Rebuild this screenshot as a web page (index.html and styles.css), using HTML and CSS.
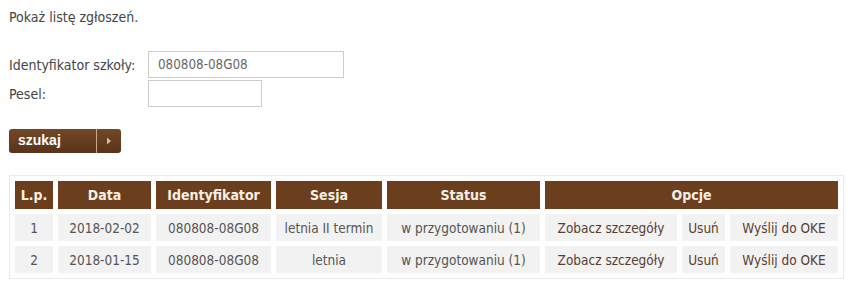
FILE: index.html
```html
<!DOCTYPE html>
<html lang="pl">
<head>
<meta charset="utf-8">
<title>Lista zgłoszeń</title>
<link rel="stylesheet" href="styles.css">
</head>
<body>
<div class="page">
  <p class="intro">Pokaż listę zgłoszeń.</p>
  <form class="search">
    <div class="field">
      <label class="label">Identyfikator szkoły:</label>
      <input class="input input-wide" type="text" value="080808-08G08">
    </div>
    <div class="field">
      <label class="label">Pesel:</label>
      <input class="input input-short" type="text" value="">
    </div>
    <button class="btn" type="button">
      <span class="btn-text">szukaj</span>
      <span class="btn-arrow"><svg width="6" height="8" viewBox="0 0 6 8"><path d="M1 0.5 L5 4 L1 7.5 Z" fill="#d9bf9c"/></svg></span>
    </button>
  </form>
  <table class="list">
    <colgroup>
      <col class="c-lp"><col class="c-data"><col class="c-id"><col class="c-ses"><col class="c-st"><col class="c-o1"><col class="c-o2"><col class="c-o3">
    </colgroup>
    <thead>
      <tr>
        <th>L.p.</th><th>Data</th><th>Identyfikator</th><th>Sesja</th><th>Status</th><th colspan="3">Opcje</th>
      </tr>
    </thead>
    <tbody>
      <tr>
        <td>1</td><td>2018-02-02</td><td>080808-08G08</td><td>letnia II termin</td><td>w przygotowaniu (1)</td>
        <td><a class="link" href="#">Zobacz szczegóły</a></td><td><a class="link" href="#">Usuń</a></td><td><a class="link" href="#">Wyślij do OKE</a></td>
      </tr>
      <tr>
        <td>2</td><td>2018-01-15</td><td>080808-08G08</td><td>letnia</td><td>w przygotowaniu (1)</td>
        <td><a class="link" href="#">Zobacz szczegóły</a></td><td><a class="link" href="#">Usuń</a></td><td><a class="link" href="#">Wyślij do OKE</a></td>
      </tr>
    </tbody>
  </table>
</div>
</body>
</html>
```
FILE: styles.css
```css
html, body {
  margin: 0;
  padding: 0;
  background: #ffffff;
}
body {
  font-family: "DejaVu Sans Condensed", "DejaVu Sans", Verdana, sans-serif;
  font-size: 14px;
  color: #444444;
}
.page {
  padding: 8px 0 0 9px;
}
.intro {
  margin: 0;
  line-height: 18px;
}
.search {
  margin: 25px 0 0 0;
}
.field {
  display: flex;
  align-items: center;
  margin-bottom: 2px;
}
.label {
  width: 139px;
  line-height: 18px;
  color: #444444;
}
.input {
  box-sizing: border-box;
  height: 27px;
  border: 1px solid #cccccc;
  padding: 0 9px;
  font-family: inherit;
  font-size: 13.3px;
  color: #666666;
  background: #ffffff;
  outline: none;
}
.input-wide { width: 196px; }
.input-short { width: 114px; }
.btn {
  display: flex;
  align-items: stretch;
  margin-top: 22px;
  padding: 0;
  width: 112px;
  height: 24px;
  border: 0;
  border-radius: 3px;
  background: linear-gradient(#744826, #58331a);
  cursor: pointer;
}
.btn-text {
  width: 88px;
  box-sizing: border-box;
  padding-left: 9px;
  text-align: left;
  line-height: 23px;
  font-family: inherit;
  font-size: 14px;
  font-weight: bold;
  color: #ffffff;
  border-right: 1px solid #c7a98a;
}
.btn-arrow {
  flex: 1;
  display: flex;
  align-items: center;
  justify-content: center;
}
.list {
  margin-top: 22px;
  border: 1px solid #e6edf2;
  border-collapse: separate;
  border-spacing: 5px;
  table-layout: fixed;
  width: 835px;
}
.c-lp { width: 38px; }
.c-data { width: 93px; }
.c-id { width: 115px; }
.c-ses { width: 106px; }
.c-st { width: 153px; }
.c-o1 { width: 132px; }
.c-o2 { width: 43px; }
.c-o3 { width: 108px; }
.list th {
  height: 28px;
  padding: 0;
  background: #6b3f1e;
  color: #f8efe4;
  font-size: 14px;
  font-weight: bold;
  text-align: center;
}
.list td {
  height: 27px;
  padding: 0;
  background: #f2f2f2;
  color: #555555;
  font-size: 13.5px;
  text-align: center;
  white-space: nowrap;
}
.link {
  color: #5c3c30;
  text-decoration: none;
}
```
